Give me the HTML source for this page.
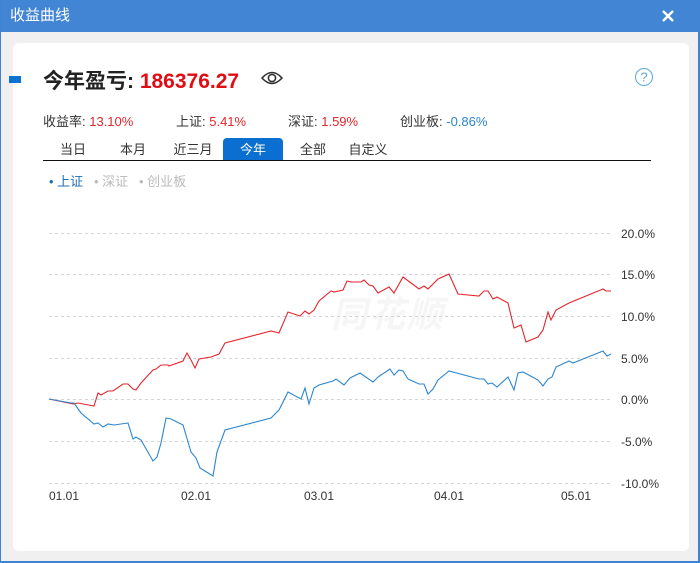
<!DOCTYPE html>
<html><head><meta charset="utf-8"><style>
*{margin:0;padding:0;box-sizing:border-box}
body{width:700px;height:563px;background:#f0f0f0;font-family:"Liberation Sans","Noto Sans CJK SC",sans-serif;position:relative;overflow:hidden;border-right:2px solid #3f83d2;border-bottom:2px solid #3f83d2;border-left:1px solid #3f83d2}
.title{position:absolute;left:0;top:0;width:700px;height:32px;background:#4285d4;color:#fff;font-size:15px;line-height:32px;padding-left:9px}
.card{position:absolute;left:12px;top:43px;width:676px;height:508px;background:#fff;border-radius:6px}
.abs{position:absolute;white-space:nowrap}
.red{color:#e3262d}.blue{color:#2c86d0}
.tab{position:absolute;top:138px;height:22px;line-height:24px;font-size:13px;color:#333;text-align:center}
</style></head><body>
<div class="title">收益曲线</div>
<svg class="abs" style="left:660px;top:9px" width="14" height="14"><path d="M2 2L12 12M12 2L2 12" stroke="#fff" stroke-width="2.4"/></svg>
<div class="card"></div>
<div class="abs" style="left:8px;top:76px;width:12px;height:7px;background:#0a72d2"></div>
<div class="abs" style="left:42px;top:65px;font-size:21px;font-weight:bold;color:#222">今年盈亏: <span style="color:#e00d14">186376.27</span></div>
<svg class="abs" style="left:260px;top:70px" width="22" height="16" viewBox="0 0 22 16"><path d="M1 8 Q11 -3 21 8 Q11 19 1 8Z" fill="none" stroke="#333" stroke-width="1.6"/><circle cx="11" cy="8" r="3.6" fill="none" stroke="#333" stroke-width="1.6"/></svg>
<svg class="abs" style="left:633px;top:67px" width="20" height="20"><circle cx="10" cy="10" r="8.5" fill="none" stroke="#5aa8dc" stroke-width="1"/><text x="10" y="14.5" font-size="13" text-anchor="middle" fill="#5aa8dc" font-family="Liberation Sans">?</text></svg>
<div class="abs" style="left:42px;top:111px;font-size:13px;color:#333">收益率: <span class="red">13.10%</span></div>
<div class="abs" style="left:175px;top:111px;font-size:13px;color:#333">上证: <span class="red">5.41%</span></div>
<div class="abs" style="left:287px;top:111px;font-size:13px;color:#333">深证: <span class="red">1.59%</span></div>
<div class="abs" style="left:399px;top:111px;font-size:13px;color:#333">创业板: <span class="blue">-0.86%</span></div>
<div class="tab" style="left:42px;width:60px">当日</div>
<div class="tab" style="left:102px;width:60px">本月</div>
<div class="tab" style="left:162px;width:60px">近三月</div>
<div class="tab" style="left:222px;width:60px;background:#0a6fd0;color:#fff;border-radius:4px 4px 0 0">今年</div>
<div class="tab" style="left:282px;width:60px">全部</div>
<div class="tab" style="left:342px;width:50px">自定义</div>
<div class="abs" style="left:42px;top:160px;width:608px;height:1px;background:#111"></div>
<div class="abs" style="left:48px;top:171px;font-size:13px;color:#1f6fb8">• 上证 <span style="color:#bbb">&nbsp;&nbsp;• 深证 &nbsp;&nbsp;• 创业板</span></div>
<div class="abs" style="left:330px;top:286px;font-size:36px;font-weight:bold;font-style:italic;color:#f6f6f6;letter-spacing:2px">同花顺</div>
<svg class="abs" style="left:0;top:0" width="700" height="563">
<g stroke="#d4d4d4" stroke-dasharray="3,3" stroke-width="1">
<line x1="48" y1="233.5" x2="610" y2="233.5"/><line x1="48" y1="274.5" x2="610" y2="274.5"/><line x1="48" y1="316.5" x2="610" y2="316.5"/><line x1="48" y1="358.5" x2="610" y2="358.5"/><line x1="48" y1="399.5" x2="610" y2="399.5"/><line x1="48" y1="441.5" x2="610" y2="441.5"/><line x1="48" y1="483.5" x2="610" y2="483.5"/>
</g>
<g font-size="12" fill="#333" font-family="Liberation Sans">
<text x="620" y="238">20.0%</text><text x="620" y="279">15.0%</text><text x="620" y="321">10.0%</text><text x="620" y="363">5.0%</text><text x="620" y="404">0.0%</text><text x="620" y="446">-5.0%</text><text x="620" y="488">-10.0%</text>
<text x="48" y="500">01.01</text><text x="180" y="500">02.01</text><text x="303" y="500">03.01</text><text x="433" y="500">04.01</text><text x="560" y="500">05.01</text>
</g>
<polyline fill="none" stroke="#e3262d" stroke-width="1.1" points="48,399 72,404 77,403 93,406 97,393 100,395 107,391 112,391 122,384 127,384 132,389 135,390 140,383 152,370 155,369 160,365 167,365 168,366 182,361 186,353 190,360 194,368 198,359 210,357 218,354 224,343 270,331 278,333 287,312 299,316 304,311 308,314 313,310 318,301 330,291 333,292 342,290 346,281 350,282 360,282 363,280 368,285 372,286 377,293 388,287 393,293 402,277 418,289 423,286 427,289 437,279 448,274 457,294 478,296 483,291 487,291 492,299 496,297 507,303 513,328 520,325 525,342 537,337 542,330 547,312 550,320 555,310 568,303 602,289 605,291 610,291"/>
<polyline fill="none" stroke="#2c86d0" stroke-width="1.1" points="48,399 70,403 73,403 80,413 93,424 97,423 102,427 107,424 113,425 127,423 132,439 135,437 140,440 152,461 156,457 160,443 165,418 170,419 182,425 190,452 195,458 199,468 212,476 216,452 224,430 270,418 278,410 287,392 300,399 304,388 308,404 313,388 318,385 332,381 335,379 343,385 349,378 359,373 372,382 377,377 389,369 393,375 398,370 402,371 407,379 418,384 423,384 427,394 432,389 437,380 448,371 478,379 483,379 487,384 491,383 496,387 507,377 513,390 517,373 522,372 537,380 542,386 547,379 551,377 555,367 568,361 572,363 602,351 606,356 610,354"/>
</svg>
</body></html>
